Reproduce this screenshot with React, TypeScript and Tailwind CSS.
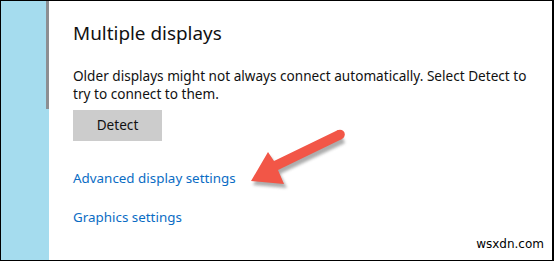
import React from 'react'

const Arrow: React.FC = () => (
  <svg className="absolute left-[239px] top-[127px]" width="115" height="68" viewBox="0 0 115 68">
    <defs>
      <filter id="sh" x="-20%" y="-20%" width="140%" height="140%">
        <feGaussianBlur stdDeviation="1.5" />
      </filter>
    </defs>
    <g transform="translate(2 3)" fill="#6b6b6b" opacity="0.55" filter="url(#sh)">
      <path d="M103 12 L38 43 L45 57 L11 54 L28 25 L34 34 L99 3 Z" />
    </g>
    <g fill="#f25647">
      <path d="M102 11 L38 42 L44 56 L11 53 L28 24 L34 33 L98 2 Z" />
      <circle cx="100" cy="6.5" r="4.8" />
    </g>
  </svg>
)

export default function App() {
  return (
    <div className="relative flex w-[554px] h-[261px] border border-black border-r-2 bg-white overflow-hidden" style={{ fontFamily: '"Noto Sans", sans-serif' }}>
      <div className="w-[45px] bg-[#a5dcee]" />
      <div className="w-[3px] flex flex-col">
        <div className="h-[108px] bg-[#8c8f92]" />
        <div className="flex-1 bg-[#a5dcee]" />
      </div>
      <div className="flex-1 pl-[24px] pt-[19px]">
        <h1 className="text-[18.9px] leading-[26px] text-[#111]">Multiple displays</h1>
        <p className="mt-[21px] text-[13.6px] leading-[18px] text-[#111] w-[462px]">
          Older displays might not always connect automatically. Select Detect to try to connect to them.
        </p>
        <button className="mt-[7px] w-[89px] h-[31px] bg-[#cccccc] text-[13.6px] text-[#111]">Detect</button>
        <div className="mt-[27px] text-[13.4px] leading-[20px] text-[#0a6cc4]">Advanced display settings</div>
        <div className="mt-[19px] text-[13.4px] leading-[20px] text-[#0a6cc4]">Graphics settings</div>
      </div>
      <Arrow />
      <div className="absolute right-[8px] bottom-[10px] text-[12px] leading-none text-black" style={{ fontFamily: '"DejaVu Sans", sans-serif' }}>wsxdn.com</div>
    </div>
  )
}
